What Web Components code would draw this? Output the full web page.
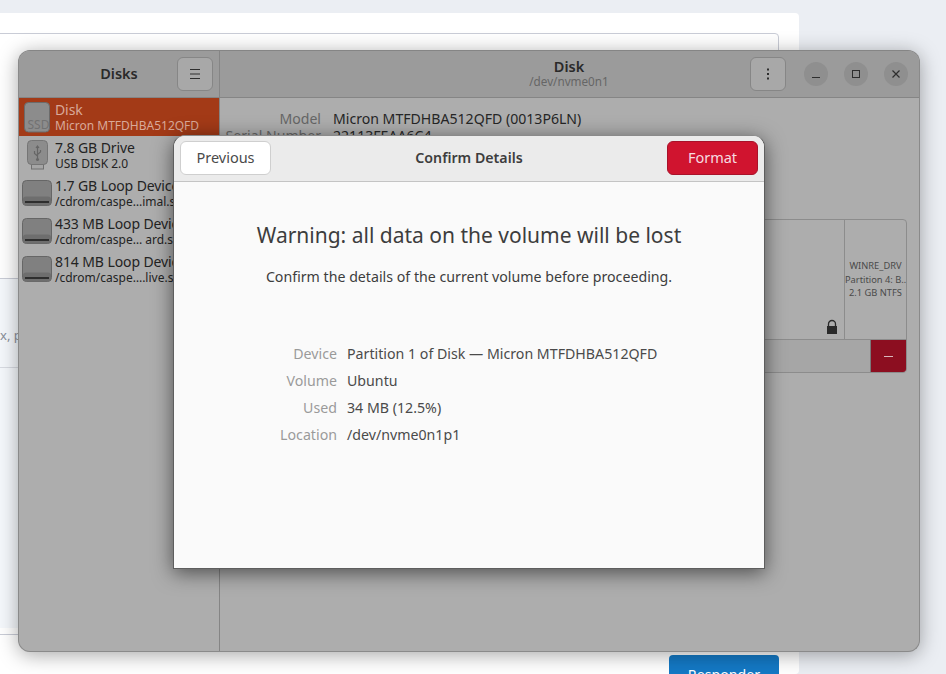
<!DOCTYPE html>
<html lang="en">
<head>
<meta charset="utf-8">
<title>Disks</title>
<style>
  html, body { margin: 0; height: 100%; overflow: hidden; background: #ebeef3; }
  body { font-family: "Noto Sans", "Open Sans", sans-serif; }
</style>
</head>
<body>
<page-backdrop></page-backdrop>

<disks-window>
  <disk-item slot="list" name="Disk" sub="Micron MTFDHBA512QFD" icon="ssd" selected></disk-item>
  <disk-item slot="list" name="7.8 GB Drive" sub="USB DISK 2.0" icon="usb"></disk-item>
  <disk-item slot="list" name="1.7 GB Loop Device" sub="/cdrom/caspe…imal.squashfs" icon="loop"></disk-item>
  <disk-item slot="list" name="433 MB Loop Device" sub="/cdrom/caspe… ard.squashfs" icon="loop"></disk-item>
  <disk-item slot="list" name="814 MB Loop Device" sub="/cdrom/caspe….live.squashfs" icon="loop"></disk-item>
</disks-window>

<format-dialog>
  <detail-row label="Device" value="Partition 1 of Disk — Micron MTFDHBA512QFD"></detail-row>
  <detail-row label="Volume" value="Ubuntu"></detail-row>
  <detail-row label="Used" value="34 MB (12.5%)"></detail-row>
  <detail-row label="Location" value="/dev/nvme0n1p1"></detail-row>
</format-dialog>

<script>
// the web page that sits behind the app window
class PageBackdrop extends HTMLElement {
  constructor() {
    super();
    const shadow = this.attachShadow({mode: 'open'});
    shadow.innerHTML = `<style>
      :host { display: block; padding-top: 13px; width: 799px; height: 661px; overflow: hidden; }
      .card { background: white; margin-left: -20px; height: 661px; border-radius: 4px; padding: 20px 20px 0 0; box-sizing: border-box; }
      .input { height: 246px; border: 1px solid #c9ccd6; border-radius: 4px; box-sizing: border-box; }
      .editor { height: 89px; background: #f5f8fc; padding: 47px 0 0 20px; box-sizing: border-box; color: #8a8f99; font-size: 13px; line-height: 18px; border-bottom: 1px solid #d8dbe2; }
      .rest { height: 260px; background: #f5f8fc; }
      .foot { height: 6px; border-bottom: 1px solid #c9ccd6; }
      .actions { display: flex; justify-content: flex-end; padding-top: 20px; }
      .send { width: 110px; height: 40px; background: #1479c5; color: white; border-radius: 4px 4px 0 0; text-align: center; font-size: 14.2px; line-height: 40px; }
    </style>
    <div class="card">
      <div class="input"></div>
      <div class="editor"><span>x, p</span></div>
      <div class="rest"></div>
      <div class="foot"></div>
      <div class="actions"><div class="send">Responder</div></div>
    </div>`;
  }
}

// one row of the drive list
class DiskItem extends HTMLElement {
  constructor() {
    super();
    const shadow = this.attachShadow({mode: 'open'});
    const icons = {
      ssd: `<svg width="34" height="34" viewBox="0 0 34 34">
        <rect x="3.5" y="2.5" width="25" height="29.5" rx="4" fill="#8c8c8c" stroke="#6b6b6b"/>
        <text x="17.5" y="28.7" text-anchor="middle" font-size="12" fill="#727272" font-family="Noto Sans">SSD</text>
      </svg>`,
      usb: `<svg width="34" height="34" viewBox="0 0 34 34">
        <rect x="10.5" y="26.5" width="12" height="4.5" fill="#a5a5a5" stroke="#707070"/>
        <rect x="6.5" y="2.5" width="20" height="24" rx="4" fill="#8c8c8c" stroke="#757575"/>
        <path d="M16.5 8v13M15 10l1.5-2 1.5 2M16.5 18l-3-2.5V13M16.5 16.5l3-2.5v-2" fill="none" stroke="#666" stroke-width="1.2"/>
        <circle cx="16.5" cy="21.5" r="1.5" fill="#666"/>
      </svg>`,
      loop: `<svg width="34" height="34" viewBox="0 0 34 34">
        <rect x="1.5" y="4.5" width="29" height="25" rx="4" fill="#808080" stroke="#666"/>
        <rect x="2" y="20.5" width="28" height="9" rx="3" fill="#6e6e6e"/>
        <rect x="4" y="25" width="24" height="2" fill="#2e2e2e"/>
      </svg>`
    };
    shadow.innerHTML = `<style>
      :host { display: flex; align-items: center; height: 38px; padding-left: 2px; box-sizing: border-box; white-space: nowrap; overflow: hidden; color: #232323; }
      :host([selected]) { background: #a33a17; color: #d9a999; }
      svg { display: block; flex: none; }
      .text { padding-top: 1px; line-height: 15px; }
      .name { font-size: 14px; letter-spacing: -.1px; }
      .sub { font-size: 12px; margin-top: 1px; }
    </style>
    ${icons[this.getAttribute('icon')]}
    <div class="text">
      <div class="name">${this.getAttribute('name')}</div>
      <div class="sub">${this.getAttribute('sub')}</div>
    </div>`;
  }
}

// the dimmed main window of Disks
class DisksWindow extends HTMLElement {
  constructor() {
    super();
    const shadow = this.attachShadow({mode: 'open'});
    shadow.innerHTML = `<style>
      :host { position: absolute; left: 18px; top: 50px; width: 902px; height: 602px; box-sizing: border-box; display: block;
        background: #adadad; border: 1px solid #8a8a8a; border-top-color: #858585; border-radius: 12px; box-shadow: 0 3px 20px rgba(0,0,0,.35); overflow: hidden; color: #2a2a2a; }
      .wrap { display: grid; grid-template-columns: 201px 1fr; grid-template-rows: 47px 1fr; height: 100%; }
      .bar { background: #9b9b9b; border-bottom: 1px solid #858585; display: flex; align-items: center; }
      .side-bar { border-right: 1px solid #858585; padding-right: 6px; }
      .side-bar .title { flex: 1; text-align: center; font-weight: 600; font-size: 14.5px; padding: 0 0 2px 42px; }
      .main-bar { padding-right: 11px; }
      .spacer { width: 168px; flex: none; }
      .heading { flex: 1; text-align: center; line-height: 15px; }
      .heading b { display: block; font-size: 14.5px; font-weight: 600; }
      .heading small { display: block; font-size: 11.7px; color: #666; }
      .tool { width: 36px; height: 34px; flex: none; box-sizing: border-box; border: 1px solid #868686; border-radius: 6px; background: #a8a8a8; display: flex; align-items: center; justify-content: center; }
      .ctl { width: 24px; height: 24px; flex: none; border-radius: 50%; background: #8f8f8f; display: flex; align-items: center; justify-content: center; margin-left: 16px; }
      .ctl.first { margin-left: 18px; }
      svg { display: block; }
      .list { border-right: 1px solid #858585; }
      .pane { padding: 12px 12px 0 0; min-width: 0; }
      .info { display: grid; grid-template-columns: 101px 1fr; column-gap: 12px; font-size: 14.1px; line-height: 17px; }
      .info span:nth-child(odd) { text-align: right; color: #666; white-space: nowrap; }
      .info span:nth-child(even) { color: #262626; }
      .volumes { margin-top: 75px; height: 154px; box-sizing: border-box; border: 1px solid #8c8c8c; border-radius: 4px; display: grid; grid-template-rows: 120px 1fr; }
      .parts { display: flex; border-bottom: 1px solid #8c8c8c; }
      .part-a { flex: 1; display: flex; justify-content: flex-end; align-items: flex-end; padding: 0 5px 4px 0; }
      .part-b { width: 62px; border-left: 1px solid #8c8c8c; display: flex; flex-direction: column; justify-content: center; text-align: center; font-size: 9.3px; line-height: 13.5px; color: #4a4a4a; white-space: nowrap; overflow: hidden; box-sizing: border-box; }
      .tools { display: flex; justify-content: flex-end; background: #a6a6a6; }
      .del { width: 35px; background: #8c0e20; border-left: 1px solid #7a7a7a; display: flex; align-items: center; justify-content: center; border-radius: 0 0 3px 0; }
    </style>
    <div class="wrap">
      <div class="bar side-bar">
        <div class="title">Disks</div>
        <div class="tool"><svg width="16" height="16" viewBox="0 0 16 16"><path d="M3 3.5h10M3 8h10M3 12.5h10" stroke="#2e2e2e" stroke-width="1"/></svg></div>
      </div>
      <div class="bar main-bar">
        <div class="spacer"></div>
        <div class="heading"><b>Disk</b><small>/dev/nvme0n1</small></div>
        <div class="tool"><svg width="16" height="16" viewBox="0 0 16 16" fill="#2e2e2e"><rect x="7" y="2.5" width="2" height="2"/><rect x="7" y="7" width="2" height="2"/><rect x="7" y="11.5" width="2" height="2"/></svg></div>
        <div class="ctl first"><svg width="16" height="16" viewBox="0 0 16 16"><path d="M4 11.5h8" stroke="#2e2e2e" stroke-width="1"/></svg></div>
        <div class="ctl"><svg width="16" height="16" viewBox="0 0 16 16"><rect x="4.5" y="4.5" width="7" height="7" fill="none" stroke="#2e2e2e"/></svg></div>
        <div class="ctl"><svg width="16" height="16" viewBox="0 0 16 16"><path d="M4.5 4.5l7 7M11.5 4.5l-7 7" stroke="#2e2e2e" stroke-width="1.2"/></svg></div>
      </div>
      <div class="list"><slot name="list"></slot></div>
      <div class="pane">
        <div class="info">
          <span>Model</span><span>Micron MTFDHBA512QFD (0013P6LN)</span>
          <span>Serial Number</span><span>22113FEAA6C4</span>
        </div>
        <div class="volumes">
          <div class="parts">
            <div class="part-a"><svg width="14" height="16" viewBox="0 0 14 16"><path d="M3.5 8V5a3.5 3.5 0 0 1 7 0v3" fill="none" stroke="#2a2a2a" stroke-width="1.3"/><rect x="2" y="7" width="10" height="8" fill="#2a2a2a"/></svg></div>
            <div class="part-b"><div>WINRE_DRV</div><div>Partition 4: B…</div><div>2.1 GB NTFS</div></div>
          </div>
          <div class="tools"><div class="del"><svg width="16" height="16" viewBox="0 0 16 16"><path d="M3 8.5h9" stroke="#d9b8bd" stroke-width="1"/></svg></div></div>
        </div>
      </div>
    </div>`;
  }
}

// a label and its value in the confirm dialog
class DetailRow extends HTMLElement {
  constructor() {
    super();
    const shadow = this.attachShadow({mode: 'open'});
    shadow.innerHTML = `<style>
      :host { display: grid; grid-template-columns: 163px 1fr; column-gap: 10px; height: 27px; line-height: 27px; font-size: 14.2px; color: #4a4a4a; white-space: nowrap; }
      .k { text-align: right; color: #9a9a9a; }
    </style>
    <div class="k">${this.getAttribute('label')}</div>
    <div>${this.getAttribute('value')}</div>`;
  }
}

// modal dialog, on top of the window
class FormatDialog extends HTMLElement {
  constructor() {
    super();
    const shadow = this.attachShadow({mode: 'open'});
    shadow.innerHTML = `<style>
      :host { position: absolute; left: 173px; top: 135px; width: 592px; height: 434px; box-sizing: border-box; display: flex; flex-direction: column;
        background: #fafafa; border: 1px solid #5e5e5e; border-top-color: #8a8a8a; border-radius: 12px 12px 0 0; box-shadow: 0 4px 20px rgba(0,0,0,.55); color: #3d3d3d; }
      header { height: 46px; flex: none; box-sizing: border-box; background: #ebebeb; border-bottom: 1px solid #c4c4c4; border-radius: 11px 11px 0 0; display: flex; align-items: center; padding: 0 6px 1px 6px; }
      header b { flex: 1; text-align: center; font-size: 14.2px; font-weight: 600; padding-bottom: 2px; }
      button { width: 91px; height: 34px; box-sizing: border-box; border-radius: 6px; font: inherit; font-size: 14.5px; padding: 0 0 3px; }
      .prev { background: white; border: 1px solid #cfcfcf; color: #4a4a4a; }
      .go { background: #d0142f; border: 1px solid #a8122a; color: #f6dce0; }
      h1 { margin: 36px 0 0; text-align: center; font-size: 21px; line-height: 34px; font-weight: 400; }
      p { margin: 14px 0 0; text-align: center; font-size: 14.2px; line-height: 22px; }
      .rows { margin-top: 52px; }
    </style>
    <header>
      <button class="prev">Previous</button>
      <b>Confirm Details</b>
      <button class="go">Format</button>
    </header>
    <h1>Warning: all data on the volume will be lost</h1>
    <p>Confirm the details of the current volume before proceeding.</p>
    <div class="rows"><slot></slot></div>`;
  }
}

customElements.define('page-backdrop', PageBackdrop);
customElements.define('disk-item', DiskItem);
customElements.define('disks-window', DisksWindow);
customElements.define('detail-row', DetailRow);
customElements.define('format-dialog', FormatDialog);
</script>
</body>
</html>
